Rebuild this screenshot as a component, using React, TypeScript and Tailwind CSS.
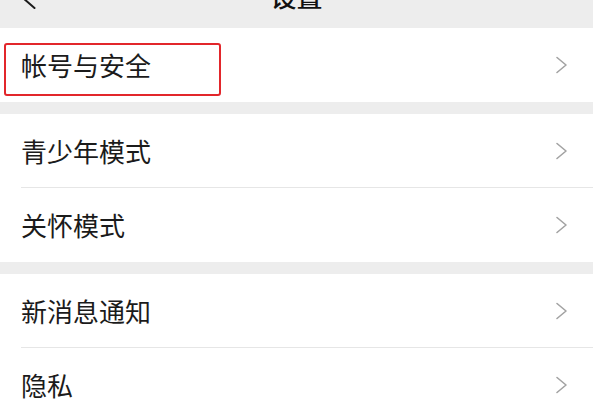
import React from 'react';

const font = { fontFamily: '"Noto Sans CJK SC", "Noto Sans", sans-serif' };

interface RowProps {
    label: string;
    divider?: boolean;
    highlight?: boolean;
}

const Chevron: React.FC = () => (
    <svg width="13" height="18" viewBox="0 0 13 18" fill="none" className="shrink-0">
        <path d="M2 1.5 L11 9 L2 16.5" stroke="#a3a3a3" strokeWidth="1.6" strokeLinecap="round" strokeLinejoin="round" />
    </svg>
);

const Row: React.FC<RowProps> = ({ label, divider, highlight }) => (
    <div className="relative h-[74px] bg-white flex">
        <div className={`flex-1 flex items-center justify-between ml-[21px] pr-[25px] ${divider ? 'border-b border-[#e6e6e6]' : ''}`}>
            <span className="text-[26px] leading-none text-[#1b1b1b]">{label}</span>
            <Chevron />
        </div>
        {highlight && (
            <div className="absolute left-[4px] top-[15px] w-[217px] h-[53px] border-2 border-[#e2262b] rounded-[3px]" />
        )}
    </div>
);

const App: React.FC = () => {
    return (
        <div className="w-[600px] h-[420px] overflow-hidden bg-white" style={font}>
            <div className="w-[593px]">
                {/* Header (mostly scrolled out of view) */}
                <div className="h-[64px] -mt-[36px] bg-[#ededed] grid grid-cols-[1fr_auto_1fr] items-center">
                    <div className="pl-[21px] translate-y-[2px]">
                        <svg width="15" height="22" viewBox="0 0 15 22" fill="none">
                            <path d="M13.5 1 L2 11 L13.5 21" stroke="#1b1b1b" strokeWidth="2" strokeLinecap="round" strokeLinejoin="round" />
                        </svg>
                    </div>
                    <span className="text-[26px] leading-none font-medium text-[#111]">设置</span>
                    <div />
                </div>

                <Row label="帐号与安全" highlight />

                <div className="h-[12px] bg-[#ededed]" />

                <Row label="青少年模式" divider />
                <Row label="关怀模式" />

                <div className="h-[12px] bg-[#ededed]" />

                <Row label="新消息通知" divider />
                <Row label="隐私" />
            </div>
        </div>
    );
};

export default App;
